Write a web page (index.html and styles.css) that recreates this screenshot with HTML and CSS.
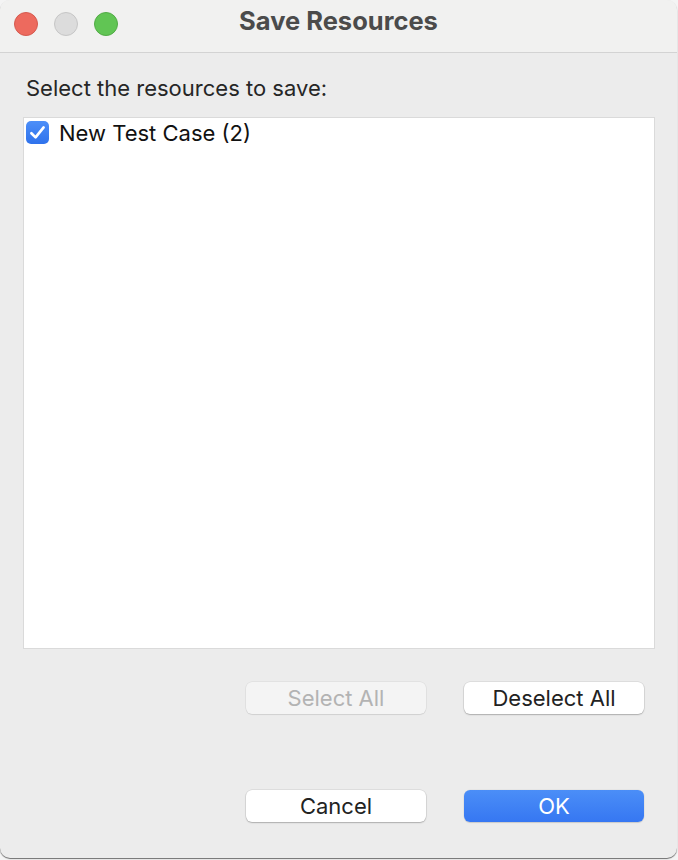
FILE: index.html
```html
<!DOCTYPE html>
<html>
<head>
<meta charset="utf-8">
<link rel="stylesheet" href="styles.css">
</head>
<body>
<div class="window">
  <div class="titlebar">
    <div class="lights">
      <span class="light red"></span>
      <span class="light gray"></span>
      <span class="light green"></span>
    </div>
    <div class="title">Save Resources</div>
  </div>
  <div class="content">
    <div class="label">Select the resources to save:</div>
    <div class="list">
      <div class="row">
        <span class="checkbox">
          <svg viewBox="0 0 24 24" width="21" height="21"><path d="M5 12.8 L9.8 17.6 L19 6.2" fill="none" stroke="#fff" stroke-width="3" stroke-linecap="round" stroke-linejoin="round"/></svg>
        </span>
        <span class="item">New Test Case (2)</span>
      </div>
    </div>
    <div class="btnrow first">
      <button class="btn disabled">Select All</button>
      <button class="btn">Deselect All</button>
    </div>
    <div class="btnrow second">
      <button class="btn">Cancel</button>
      <button class="btn primary">OK</button>
    </div>
  </div>
</div>
</body>
</html>
```
FILE: styles.css
```css
html, body {
  margin: 0;
  padding: 0;
}
body {
  background: #f4f4f4;
  width: 678px;
  height: 860px;
  overflow: hidden;
  font-family: Inter, "Liberation Sans", sans-serif;
}
.window {
  width: 677px;
  height: 858px;
  background: #ececec;
  border-radius: 10px;
  box-shadow: 0 1px 1px rgba(0,0,0,0.55);
  overflow: hidden;
  display: flex;
  flex-direction: column;
}
.titlebar {
  height: 52px;
  flex: none;
  background: #f1f1f0;
  border-bottom: 1px solid #d3d3d3;
  display: flex;
  align-items: center;
  justify-content: center;
  position: relative;
}
.lights {
  position: absolute;
  left: 14px;
  top: 12px;
  display: flex;
  gap: 16px;
}
.light {
  width: 22px;
  height: 22px;
  border-radius: 50%;
  border: 1px solid transparent;
}
.red { background: #ed6a5e; border-color: #d55a4f; }
.gray { background: #dcdcdc; border-color: #c6c6c6; }
.green { background: #61c554; border-color: #52ab46; }
.title {
  font-weight: 700;
  font-size: 25.5px;
  line-height: 30px;
  color: #4b4b4b;
  margin-top: -10px;
  margin-left: 0;
}
.content {
  flex: 1;
  display: flex;
  flex-direction: column;
  padding: 22px 0 0 23px;
}
.label {
  font-size: 22px;
  line-height: 26px;
  color: #262626;
  padding-left: 3px;
}
.list {
  margin-top: 16px;
  width: 630px;
  height: 530px;
  background: #fff;
  border: 1px solid #dadada;
}
.row {
  display: flex;
  align-items: center;
  padding: 2px 0 0 2px;
  height: 25px;
}
.checkbox {
  width: 23px;
  height: 23px;
  border-radius: 5px;
  background: linear-gradient(#4d8ff8, #2f72ec);
  display: flex;
  align-items: center;
  justify-content: center;
}
.item {
  margin-left: 10px;
  font-size: 22px;
  color: #111;
}
.btnrow {
  display: flex;
  gap: 38px;
  padding-left: 223px;
}
.btnrow.first { margin-top: 33px; }
.btnrow.second { margin-top: 76px; }
.btn {
  width: 180px;
  height: 32px;
  border: none;
  border-radius: 6px;
  background: #fff;
  box-shadow: 0 0 0 0.5px rgba(0,0,0,0.12), 0 1px 1.5px rgba(0,0,0,0.22);
  font-family: Inter, "Liberation Sans", sans-serif;
  font-size: 22px;
  color: #222;
  padding: 0;
}
.btn.disabled {
  background: #f4f4f4;
  color: #b3b3b3;
  box-shadow: 0 0 0 0.5px rgba(0,0,0,0.08), 0 1px 1px rgba(0,0,0,0.08);
}
.btn.primary {
  background: linear-gradient(#4b8ef7, #3677f2);
  color: #fff;
  box-shadow: 0 0 0 0.5px rgba(0,0,0,0.06), 0 1px 1px rgba(0,0,0,0.12);
}
```
